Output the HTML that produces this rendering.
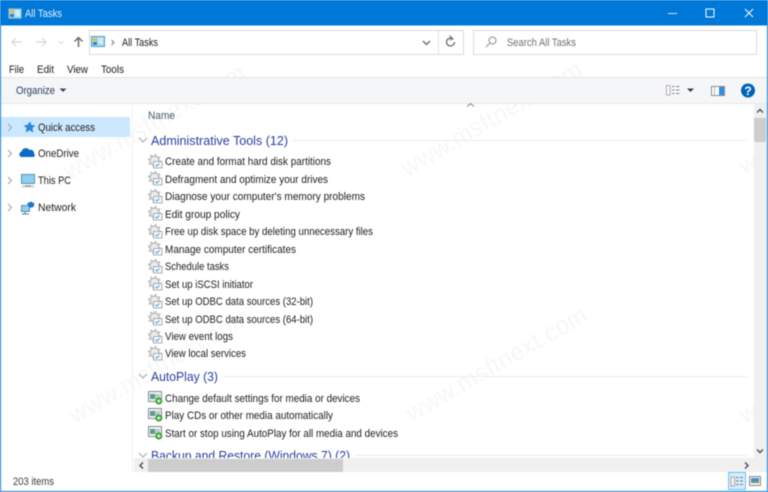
<!DOCTYPE html>
<html><head><meta charset="utf-8"><title>All Tasks</title>
<style>
html,body{margin:0;padding:0;background:#fff;overflow:hidden}
svg{display:block;filter:blur(.4px)}
text{font-family:"Liberation Sans",sans-serif;font-size:11px;fill:#202020}
.h{font-size:13px;fill:#2a3f9e}
.wm{font-size:25px;fill:#f7f7f7;letter-spacing:.5px}
</style></head><body>
<svg width="768" height="492" viewBox="0 0 768 492" xmlns="http://www.w3.org/2000/svg">
<defs>
<symbol id="gear" viewBox="0 0 15 15">
<circle cx="6.5" cy="6.5" r="4.500" fill="#ececec" stroke="#b4b4b4" stroke-width="1.3"/>
<circle cx="6.500" cy="6.500" r="6" fill="none" stroke="#bdbdbd" stroke-width="1.500" stroke-dasharray="2 2.700"/>
<rect x="5.500" y="7.500" width="8.500" height="6.500" fill="#f7f7f7" stroke="#9c9c9c" stroke-width=".8"/>
<path d="M7.500 10.800l1.300 1.300 2.700-2.800" fill="none" stroke="#4a9fe0" stroke-width="1"/>
</symbol>
<symbol id="ap" viewBox="0 0 15 14">
<rect x=".5" y=".5" width="13" height="10" fill="#f2f2f2" stroke="#8a8a8a"/>
<rect x="2" y="3" width="5" height="5" fill="#5c9a8c"/>
<rect x="7" y="3" width="5" height="5" fill="#b9ccd6"/>
<circle cx="10.800" cy="10" r="3.600" fill="#3aa832"/>
<path d="M9 10h3.600M10.800 8.200v3.600" stroke="#fff" stroke-width="1"/>
</symbol>
<symbol id="ti" viewBox="0 0 14 11">
<rect x=".5" y=".5" width="13" height="10" fill="#a8dcf6" stroke="#4f9ccc"/>
<rect x="2" y="2" width="4" height="3" fill="#f2b33a"/>
<rect x="2" y="6" width="4" height="3" fill="#2f7fc0"/>
<path d="M7.500 3h4.500M7.500 5h4.500M7.500 7h4.500" stroke="#f4fbff" stroke-width="1"/>
</symbol>
</defs>

<rect width="768" height="492" fill="#fff"/>

<!-- watermark -->
<g>
<text class="wm" transform="translate(70 180) rotate(-30)" textLength="205" lengthAdjust="spacingAndGlyphs">www.msftnext.com</text>
<text class="wm" transform="translate(407 177) rotate(-30)" textLength="205" lengthAdjust="spacingAndGlyphs">www.msftnext.com</text>
<text class="wm" transform="translate(745 175) rotate(-30)" textLength="205" lengthAdjust="spacingAndGlyphs">www.msftnext.com</text>
<text class="wm" transform="translate(75 424) rotate(-30)" textLength="205" lengthAdjust="spacingAndGlyphs">www.msftnext.com</text>
<text class="wm" transform="translate(412 422) rotate(-30)" textLength="205" lengthAdjust="spacingAndGlyphs">www.msftnext.com</text>
<text class="wm" transform="translate(745 424) rotate(-30)" textLength="205" lengthAdjust="spacingAndGlyphs">www.msftnext.com</text>
</g>

<!-- title bar -->
<rect width="768" height="25.500" fill="#0078d7"/>
<use href="#ti" x="8" y="8" width="14" height="11"/>
<text x="25" y="17" style="fill:#e6f2fb" textLength="37" lengthAdjust="spacingAndGlyphs">All Tasks</text>
<path d="M668 13.500h9" stroke="#fff" stroke-width="1" opacity=".8"/>
<rect x="706" y="9" width="8" height="8" fill="none" stroke="#fff" stroke-width="1"/>
<path d="M745 9l8 8M753 9l-8 8" stroke="#fff" stroke-width="1"/>

<!-- address row -->
<path d="M12 42h10M16 38l-4 4 4 4" fill="none" stroke="#d6d6d6" stroke-width="1.200"/>
<path d="M36 42h10M42 38l4 4-4 4" fill="none" stroke="#d6d6d6" stroke-width="1.200"/>
<path d="M58.500 41l2.500 2.500 2.500-2.500" fill="none" stroke="#dcdcdc"/>
<path d="M78.500 47v-9.500M74.500 41.500l4-4 4 4" fill="none" stroke="#6b6b6b" stroke-width="1.500"/>
<rect x="89.500" y="30.500" width="374" height="24" fill="#fff" stroke="#dadada"/>
<use href="#ti" x="91" y="36" width="14" height="11"/>
<path d="M111.500 40l2.500 2.500-2.500 2.500" fill="none" stroke="#777"/>
<text x="122" y="46" textLength="36" lengthAdjust="spacingAndGlyphs">All Tasks</text>
<path d="M423 41l3.500 3.500 3.500-3.500" fill="none" stroke="#666" stroke-width="1.300"/>
<path d="M438.500 31v23" stroke="#e3e3e3"/>
<path d="M454.500 42a4 4 0 1 1-1.600-3.200" fill="none" stroke="#6e6e6e" stroke-width="1.300"/>
<path d="M449.500 35.500l3.500 3.500-3.500 1" fill="none" stroke="#6e6e6e" stroke-width="1"/>
<rect x="473.500" y="30.500" width="283" height="24" fill="#fff" stroke="#dadada"/>
<circle cx="492.500" cy="40.500" r="3.500" fill="none" stroke="#8e8e8e" stroke-width="1"/>
<path d="M489.500 43.500l-3.500 3.500" stroke="#b98a9a" stroke-width="1.200"/>
<text x="507" y="46" style="fill:#707070" textLength="69" lengthAdjust="spacingAndGlyphs">Search All Tasks</text>

<!-- menu -->
<text x="9" y="73" textLength="15" lengthAdjust="spacingAndGlyphs">File</text>
<text x="37" y="73" textLength="17" lengthAdjust="spacingAndGlyphs">Edit</text>
<text x="67" y="73" textLength="21" lengthAdjust="spacingAndGlyphs">View</text>
<text x="101" y="73" textLength="23" lengthAdjust="spacingAndGlyphs">Tools</text>

<!-- toolbar -->
<rect x="1" y="78" width="766" height="25" fill="#f5f6f7"/>
<path d="M1 77.500h766" stroke="#e3e3e3"/>
<path d="M1 103.500h766" stroke="#e8e8e8"/>
<text x="16" y="94" style="fill:#1e3a5a" textLength="39" lengthAdjust="spacingAndGlyphs">Organize</text>
<path d="M59.500 88.500h7l-3.500 3.500z" fill="#3a4a60"/>
<rect x="666.500" y="85.500" width="3.500" height="9.500" fill="#fff" stroke="#9a9a9a" stroke-width=".8"/>
<path d="M672 86.500h2.500M676 86.500h3.500M672 90h2.500M676 90h3.500M672 93.500h2.500M676 93.500h3.500" stroke="#8a8a8a"/>
<path d="M687 88.500h7l-3.500 3.500z" fill="#2d3f58"/>
<rect x="711.500" y="86.500" width="13" height="9" fill="#fff" stroke="#8f8f8f"/>
<rect x="719" y="87" width="5" height="8" fill="#2d8fe8"/>
<path d="M714.500 87v8" stroke="#b5b5b5"/>
<circle cx="748" cy="90.500" r="7" fill="#0063b8"/>
<text x="748" y="95" text-anchor="middle" style="fill:#fff;font-size:12px;font-weight:bold">?</text>

<!-- nav pane -->
<rect x="1" y="117" width="129" height="20" fill="#cce8ff"/>
<path d="M132.500 103v369" stroke="#f0f0f0"/>
<g fill="none" stroke="#a6a6a6" stroke-width="1.100">
<path d="M8 124l3.500 3.500L8 131"/>
<path d="M8 150l3.500 3.500L8 157"/>
<path d="M8 177l3.500 3.500L8 184"/>
<path d="M8 204l3.500 3.500L8 211"/>
</g>
<path d="M30 121.500l1.500 3.500 3.800.5-2.800 2.600.8 4.400-3.800-2.200-3.800 2.200.8-4.400-3-2.600 3.700-.5z" fill="#2f86d8"/>
<text x="38" y="131" textLength="57" lengthAdjust="spacingAndGlyphs">Quick access</text>
<path d="M21 157a3 3 0 0 1 .5-5.500 4.500 4.500 0 0 1 8-1.500 3.300 3.300 0 0 1 4.500 3.500 2 2 0 0 1-.5 3.500z" fill="#0a6cc4"/>
<text x="38" y="157" textLength="41" lengthAdjust="spacingAndGlyphs">OneDrive</text>
<rect x="21.500" y="174.500" width="13" height="9" fill="#8dd0f2" stroke="#5a8fae"/>
<path d="M25 186h6" stroke="#7a7a7a" stroke-width="1.200"/>
<path d="M22 186.500h12" stroke="#a0a0a0"/>
<text x="38" y="184" textLength="33" lengthAdjust="spacingAndGlyphs">This PC</text>
<rect x="21.500" y="205.500" width="8" height="6" fill="#8dd0f2" stroke="#5a8fae"/>
<path d="M27 203.500l4-2 3.500 2-1 3.500-4 1z" fill="#1f78c8"/>
<path d="M25 212v2M22 214h7" stroke="#6a7a88"/>
<text x="38" y="211" textLength="38" lengthAdjust="spacingAndGlyphs">Network</text>

<!-- column header -->
<text x="148" y="119" style="fill:#4d5a6a" textLength="27" lengthAdjust="spacingAndGlyphs">Name</text>
<path d="M467 106.500l3.500-2.800 3.500 2.800" fill="none" stroke="#8a8a8a" stroke-width="1.100"/>

<!-- group 1 -->
<path d="M139 138l4 4 4-4" fill="none" stroke="#a6a6a6" stroke-width="1"/>
<text class="h" x="151" y="145" textLength="137" lengthAdjust="spacingAndGlyphs">Administrative Tools (12)</text>
<path d="M293 140.500h454" stroke="#ececec"/>
<use href="#gear" x="148" y="154" width="15" height="15"/>
<text x="165" y="165" textLength="166" lengthAdjust="spacingAndGlyphs">Create and format hard disk partitions</text>
<use href="#gear" x="148" y="171" width="15" height="15"/>
<text x="165" y="183" textLength="163" lengthAdjust="spacingAndGlyphs">Defragment and optimize your drives</text>
<use href="#gear" x="148" y="189" width="15" height="15"/>
<text x="165" y="200" textLength="200" lengthAdjust="spacingAndGlyphs">Diagnose your computer's memory problems</text>
<use href="#gear" x="148" y="206" width="15" height="15"/>
<text x="165" y="218" textLength="75" lengthAdjust="spacingAndGlyphs">Edit group policy</text>
<use href="#gear" x="148" y="224" width="15" height="15"/>
<text x="165" y="235" textLength="208" lengthAdjust="spacingAndGlyphs">Free up disk space by deleting unnecessary files</text>
<use href="#gear" x="148" y="241" width="15" height="15"/>
<text x="165" y="253" textLength="131" lengthAdjust="spacingAndGlyphs">Manage computer certificates</text>
<use href="#gear" x="148" y="259" width="15" height="15"/>
<text x="165" y="270" textLength="64" lengthAdjust="spacingAndGlyphs">Schedule tasks</text>
<use href="#gear" x="148" y="276" width="15" height="15"/>
<text x="165" y="288" textLength="88" lengthAdjust="spacingAndGlyphs">Set up iSCSI initiator</text>
<use href="#gear" x="148" y="294" width="15" height="15"/>
<text x="165" y="305" textLength="148" lengthAdjust="spacingAndGlyphs">Set up ODBC data sources (32-bit)</text>
<use href="#gear" x="148" y="311" width="15" height="15"/>
<text x="165" y="323" textLength="148" lengthAdjust="spacingAndGlyphs">Set up ODBC data sources (64-bit)</text>
<use href="#gear" x="148" y="329" width="15" height="15"/>
<text x="165" y="340" textLength="68" lengthAdjust="spacingAndGlyphs">View event logs</text>
<use href="#gear" x="148" y="346" width="15" height="15"/>
<text x="165" y="357" textLength="81" lengthAdjust="spacingAndGlyphs">View local services</text>

<!-- group 2 -->
<path d="M139 374l4 4 4-4" fill="none" stroke="#a6a6a6" stroke-width="1"/>
<text class="h" x="151" y="381" textLength="67" lengthAdjust="spacingAndGlyphs">AutoPlay (3)</text>
<path d="M223 376.500h524" stroke="#ececec"/>
<use href="#ap" x="148" y="391" width="15" height="14"/>
<text x="165" y="402" textLength="195" lengthAdjust="spacingAndGlyphs">Change default settings for media or devices</text>
<use href="#ap" x="148" y="408" width="15" height="14"/>
<text x="165" y="419" textLength="168" lengthAdjust="spacingAndGlyphs">Play CDs or other media automatically</text>
<use href="#ap" x="148" y="426" width="15" height="14"/>
<text x="165" y="437" textLength="233" lengthAdjust="spacingAndGlyphs">Start or stop using AutoPlay for all media and devices</text>

<!-- group 3 -->
<path d="M139 453l4 4 4-4" fill="none" stroke="#a6a6a6" stroke-width="1"/>
<text class="h" x="151" y="460" textLength="199" lengthAdjust="spacingAndGlyphs">Backup and Restore (Windows 7) (2)</text>
<path d="M355 455.500h392" stroke="#ececec"/>

<!-- scrollbars -->
<rect x="134" y="458" width="620" height="14" fill="#f0f0f0"/>
<rect x="148" y="459" width="195" height="13" fill="#cdcdcd"/>
<path d="M143 462.500l-3 3 3 3" fill="none" stroke="#555" stroke-width="1.500"/>
<path d="M745 462.500l3 3-3 3" fill="none" stroke="#555" stroke-width="1.500"/>
<rect x="754" y="104" width="13" height="368" fill="#f0f0f0"/>
<rect x="754" y="118" width="12" height="24" fill="#cdcdcd"/>
<path d="M757 112.500l3-3 3 3" fill="none" stroke="#555" stroke-width="1.500"/>
<path d="M757 449.500l3 3 3-3" fill="none" stroke="#555" stroke-width="1.500"/>

<!-- status bar -->
<text x="13" y="485" style="fill:#3a3a3a" textLength="41" lengthAdjust="spacingAndGlyphs">203 items</text>
<rect x="728.500" y="472.500" width="17" height="17" fill="#d5ecfb" stroke="#6fc3ee"/>
<rect x="731" y="477" width="3.500" height="9" fill="#f5f5f5" stroke="#a08a8a" stroke-width=".7"/>
<path d="M736 477.500h2.500M740 477.500h3M736 481h2.500M740 481h3M736 484.500h2.500M740 484.500h3" stroke="#6a7a88"/>
<rect x="749.500" y="476.500" width="11" height="9" fill="#f4f4f4" stroke="#8a8a8a"/>
<rect x="751" y="478" width="8" height="3" fill="#4a8fc8"/>
<rect x="751" y="481" width="8" height="2" fill="#6a9a80"/>

<!-- window border -->
<path d="M.5 25v466.500h767V25" fill="none" stroke="#0078d7" stroke-width="1"/>
</svg>
</body></html>
